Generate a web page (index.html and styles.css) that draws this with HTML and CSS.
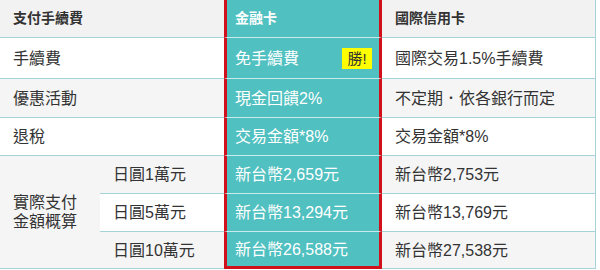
FILE: index.html
```html
<!DOCTYPE html>
<html lang="zh-Hant">
<head>
<meta charset="utf-8">
<link rel="stylesheet" href="styles.css">
</head>
<body>
<div class="table">
  <div class="cell label head r0 span2">支付手續費</div>
  <div class="cell card head r0">金融卡</div>
  <div class="cell other head r0">國際信用卡</div>

  <div class="cell label white r1 span2">手續費</div>
  <div class="cell card r1">免手續費<span class="badge">勝!</span></div>
  <div class="cell other white r1">國際交易1.5%手續費</div>

  <div class="cell label gray r2 span2">優惠活動</div>
  <div class="cell card r2">現金回饋2%</div>
  <div class="cell other gray r2">不定期．依各銀行而定</div>

  <div class="cell label white r3 span2">退稅</div>
  <div class="cell card r3">交易金額*8%</div>
  <div class="cell other white r3">交易金額*8%</div>

  <div class="cell label gray merged">實際支付金額概算</div>
  <div class="cell sub gray r4">日圓1萬元</div>
  <div class="cell card r4">新台幣2,659元</div>
  <div class="cell other gray r4">新台幣2,753元</div>

  <div class="cell sub white r5">日圓5萬元</div>
  <div class="cell card r5">新台幣13,294元</div>
  <div class="cell other white r5">新台幣13,769元</div>

  <div class="cell sub gray r6">日圓10萬元</div>
  <div class="cell card last r6">新台幣26,588元</div>
  <div class="cell other gray r6">新台幣27,538元</div>
</div>
</body>
</html>
```

FILE: styles.css
```css
html, body {
  margin: 0;
  padding: 0;
  background: #ffffff;
}

body {
  font-family: "Liberation Sans", "Noto Sans CJK TC", sans-serif;
  color: #333333;
}

.table {
  display: grid;
  width: 596px;
  grid-template-columns: 100px 124px 158px 214px;
  grid-template-rows: 38px 41px 39px 38px 38px 38px 37px;
}

.cell {
  display: flex;
  align-items: center;
  box-sizing: border-box;
  border-bottom: 1px solid #a6d3d8;
  padding-left: 13px;
  font-size: 16px;
  line-height: 19px;
  white-space: nowrap;
}

.span2 { grid-column: 1 / span 2; }

.head {
  background: #f2f2f2;
  font-size: 14px;
  font-weight: bold;
}

.white { background: #ffffff; }
.gray { background: #f5f5f5; }

.merged {
  grid-column: 1;
  grid-row: 5 / span 3;
  white-space: normal;
  padding-right: 20px;
}

.sub {
  grid-column: 2;
}

.other {
  border-right: 1px solid #a6d3d8;
}

.card {
  background: #50c0c0;
  color: #ffffff;
  border-left: 3px solid #d0101a;
  border-right: 3px solid #d0101a;
  border-bottom-color: #c8ecec;
  padding-left: 8px;
}

.card.head {
  background: #50c0c0;
}

.card.last {
  border-bottom: 3px solid #d0101a;
}

.badge {
  margin-left: auto;
  margin-right: 7px;
  background: #ffff00;
  color: #333333;
  font-size: 15px;
  line-height: 21px;
  width: 30px;
  text-align: center;
}
```
